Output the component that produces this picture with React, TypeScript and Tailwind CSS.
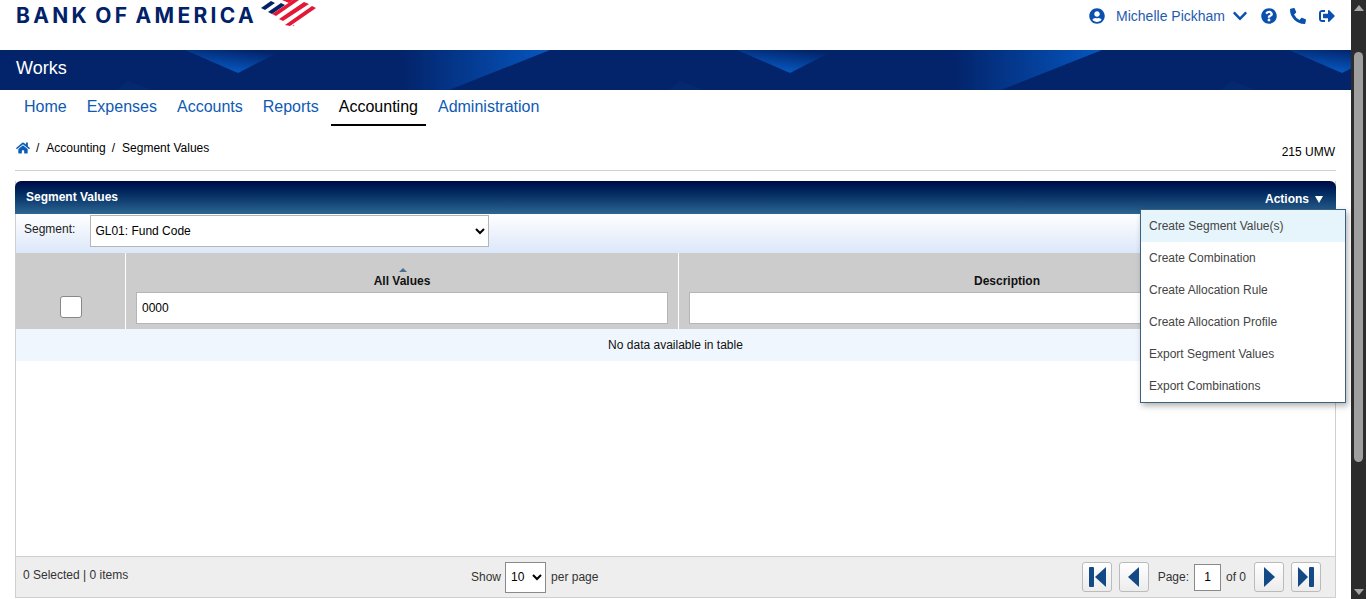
import { FaChevronDown, FaHome, FaPhoneAlt, FaQuestionCircle, FaSignOutAlt, FaUserCircle } from "react-icons/fa";

const navItems = ["Home", "Expenses", "Accounts", "Reports", "Accounting", "Administration"];

const actionItems = [
  "Create Segment Value(s)",
  "Create Combination",
  "Create Allocation Rule",
  "Create Allocation Profile",
  "Export Segment Values",
  "Export Combinations",
];

function Flag() {
  return (
    <svg width="66" height="30" viewBox="0 0 66 30">
      <g fill="#012169">
        <polygon points="6,8 16,1 20,3 10,10" />
        <polygon points="13,12 26,3 30,5 17,14" />
      </g>
      <g fill="#e31837">
        <polygon points="27,0 38,0 34,3" />
        <polygon points="17,14 38,0 44,0 21,16" />
        <polygon points="24,19 49,2 54,4 28,21" />
        <polygon points="30,25 57,6 61,8 35,26" />
        <circle cx="38.5" cy="25.5" r="0.8" opacity="0.6" />
      </g>
    </svg>
  );
}

function Banner() {
  return (
    <svg className="absolute inset-0 h-full w-full" viewBox="0 0 1351 40" preserveAspectRatio="none">
      <defs>
        <linearGradient id="tip" x1="0.4" y1="1" x2="0.9" y2="0">
          <stop offset="0.1" stopColor="#0656bd" />
          <stop offset="0.9" stopColor="#03246b" />
        </linearGradient>
        <linearGradient id="band" x1="0" y1="0" x2="1" y2="0">
          <stop offset="0.3" stopColor="#03246b" />
          <stop offset="1" stopColor="#0656c0" />
        </linearGradient>
        <g id="shapes">
          <polygon points="185,0 283,0 238,23" fill="url(#tip)" />
          <polygon points="340,0 550,0 449,40 380,40" fill="url(#band)" />
          <polygon points="117,40 153,40 128,31" fill="#04296f" />
        </g>
      </defs>
      <use href="#shapes" />
      <use href="#shapes" x="552" />
      <use href="#shapes" x="1104" />
    </svg>
  );
}

function PagerButton({ kind }: { kind: "first" | "prev" | "next" | "last" }) {
  return (
    <button className="flex h-[30px] w-[30px] items-center justify-center rounded-[3px] border border-[#bbbbbb] bg-gradient-to-b from-white to-[#ececec]">
      <svg width="24" height="24" viewBox="0 0 24 24" fill="#134a86">
        {kind === "first" && (
          <>
            <rect x="4" y="2" width="5" height="20" rx="1" />
            <polygon points="21,2 21,22 10,12" />
          </>
        )}
        {kind === "prev" && <polygon points="17,2 17,22 6,12" />}
        {kind === "next" && <polygon points="7,2 7,22 18,12" />}
        {kind === "last" && (
          <>
            <polygon points="4,2 4,22 14,12" />
            <rect x="15" y="2" width="5" height="20" rx="1" />
          </>
        )}
      </svg>
    </button>
  );
}

function Scrollbar() {
  return (
    <div className="flex h-[599px] w-[15px] shrink-0 flex-col items-center bg-[#2c2c2c]">
      <div className="mt-[5px] h-0 w-0 border-x-[5px] border-b-[6px] border-x-transparent border-b-[#a6a6a6]" />
      <div className="mt-[41px] h-[410px] w-[9px] rounded-full bg-[#9f9f9f]" />
      <div className="mt-auto mb-[4px] h-0 w-0 border-x-[5px] border-t-[6px] border-x-transparent border-t-[#a6a6a6]" />
    </div>
  );
}

export default function App() {
  return (
    <div className="flex h-[599px] w-[1366px] overflow-hidden bg-white font-['Liberation_Sans',Arial,sans-serif]">
      <div className="relative w-[1351px] shrink-0">
        {/* top bar */}
        <header className="flex h-[50px] items-start justify-between overflow-hidden pl-[16px] pr-[16px]">
          <div className="flex items-start">
            <span className="mt-[3px] w-[239px] font-['Inter',sans-serif] text-[21px] font-bold leading-[26px] tracking-[3.3px] whitespace-nowrap text-[#012169] [word-spacing:-3px]">
              BANK OF AMERICA
            </span>
            <Flag />
          </div>
          <div className="mt-[7px] flex items-center text-[#0b50ae]">
            <FaUserCircle className="h-[16px] w-[16px]" />
            <span className="ml-[11px] text-[14px] leading-[18px] text-[#1f5bb0]">Michelle Pickham</span>
            <FaChevronDown className="ml-[7px] h-[16px] w-[16px]" />
            <FaQuestionCircle className="ml-[13px] h-[16px] w-[16px]" />
            <FaPhoneAlt className="ml-[13px] h-[16px] w-[16px]" />
            <FaSignOutAlt className="ml-[13px] h-[16px] w-[16px]" />
          </div>
        </header>

        <div className="relative flex h-[40px] items-center overflow-hidden bg-[#03246b] pb-[4px] pl-[16px]">
          <Banner />
          <span className="relative text-[18px] text-white">Works</span>
        </div>

        <nav className="flex h-[36px] gap-[4px] pl-[16px]">
          {navItems.map((item) => (
            <a
              key={item}
              className={
                item === "Accounting"
                  ? "h-[36px] border-b-2 border-black px-[8px] pt-[7px] text-[16px] leading-[20px] text-black"
                  : "h-[36px] px-[8px] pt-[7px] text-[16px] leading-[20px] text-[#0e5ab4]"
              }
            >
              {item}
            </a>
          ))}
        </nav>

        {/* breadcrumb */}
        <div className="mx-[15px] flex h-[45px] items-start justify-between border-b border-[#d0d0d0] pr-px text-[12px] text-black">
          <div className="mt-[15px] flex items-center leading-[14px]">
            <FaHome className="ml-px h-[14px] w-[14px] text-[#0b5cb8]" />
            <span className="ml-[6px]">/</span>
            <span className="ml-[7px]">Accounting</span>
            <span className="ml-[6px]">/</span>
            <span className="ml-[7px]">Segment Values</span>
          </div>
          <span className="mt-[19px] leading-[14px]">215 UMW</span>
        </div>

        {/* panel */}
        <section className="mx-[15px] mt-[10px] flex h-[417px] w-[1321px] flex-col border-x border-b border-[#cfcfcf]">
          <div className="mx-[-1px] flex h-[33px] shrink-0 items-center justify-between rounded-t-[6px] bg-gradient-to-b from-[#000745] to-[#2d6692] pl-[11px] pr-[13px] text-[12px] font-bold text-white">
            <span className="mb-[1px]">Segment Values</span>
            <span className="mt-[2px] flex items-center gap-[6px]">
              Actions
              <span className="mt-px h-0 w-0 border-x-[4px] border-t-[7px] border-x-transparent border-t-white" />
            </span>
          </div>

          <div className="flex h-[39px] shrink-0 items-start bg-gradient-to-b from-white to-[#dbe7f9]">
            <label className="ml-[8px] mt-[8px] text-[12px] leading-[14px] text-[#222222]">Segment:</label>
            <select className="ml-[15px] mt-[1px] h-[32px] w-[399px] border border-[#b5b5b5] bg-white text-[12px] text-black">
              <option>GL01: Fund Code</option>
            </select>
          </div>

          <div className="flex h-[76px] shrink-0 bg-[#cccccc]">
            <div className="flex w-[110px] items-end justify-center border-r border-white pb-[11px]">
              <div className="ml-[1px] h-[22px] w-[22px] rounded-[3px] border border-[#888888] bg-white" />
            </div>
            <div className="flex w-[553px] flex-col items-center border-r border-white px-[10px]">
              <div className="ml-[2px] mt-[15px] h-0 w-0 border-x-[4px] border-b-[4px] border-x-transparent border-b-[#4d6f8e]" />
              <span className="mt-[1px] text-[12px] font-bold leading-[16px] text-[#111111]">All Values</span>
              <input
                readOnly
                value="0000"
                className="mt-[3px] h-[32px] w-full border border-[#b5b5b5] bg-white px-[5px] text-[12px] text-black"
              />
            </div>
            <div className="flex flex-1 flex-col items-center px-[10px]">
              <span className="mt-[20px] text-[12px] font-bold leading-[16px] text-[#111111]">Description</span>
              <input readOnly className="mt-[3px] h-[32px] w-full border border-[#b5b5b5] bg-white" />
            </div>
          </div>

          <div className="flex h-[32px] shrink-0 items-center justify-center bg-[#f0f6fd] text-[12px] text-[#111111]">
            No data available in table
          </div>

          <div className="flex-1" />

          <footer className="flex h-[41px] shrink-0 items-center border-t border-[#cfcfcf] bg-[#eeeeee] pl-[7px] pr-[14px] text-[12px] text-[#333333]">
            <span className="w-[448px] pb-[4px]">0 Selected | 0 items</span>
            <span>Show</span>
            <select className="ml-[4px] h-[31px] w-[41px] border border-[#8a8a8a] bg-white pl-[1px] text-[12px] text-black">
              <option>10</option>
            </select>
            <span className="ml-[5px]">per page</span>
            <div className="ml-auto flex items-center">
              <PagerButton kind="first" />
              <div className="ml-[7px]">
                <PagerButton kind="prev" />
              </div>
              <span className="ml-[9px]">Page:</span>
              <input
                readOnly
                value="1"
                className="ml-[5px] h-[27px] w-[27px] border border-[#8a8a8a] bg-white text-center text-[12px] text-black"
              />
              <span className="ml-[5px]">of 0</span>
              <div className="ml-[8px]">
                <PagerButton kind="next" />
              </div>
              <div className="ml-[7px]">
                <PagerButton kind="last" />
              </div>
            </div>
          </footer>
        </section>

        {/* actions menu */}
        <ul className="absolute left-[1140px] top-[209px] w-[206px] border border-[#3a6280] bg-white text-[12px] text-[#444444] shadow-[2px_3px_6px_rgba(0,0,0,0.3)]">
          {actionItems.map((item, i) => (
            <li
              key={item}
              className={i === 0 ? "flex h-[32px] items-center bg-[#e6f4fc] pl-[8px]" : "flex h-[32px] items-center pl-[8px]"}
            >
              {item}
            </li>
          ))}
        </ul>
      </div>
      <Scrollbar />
    </div>
  );
}
